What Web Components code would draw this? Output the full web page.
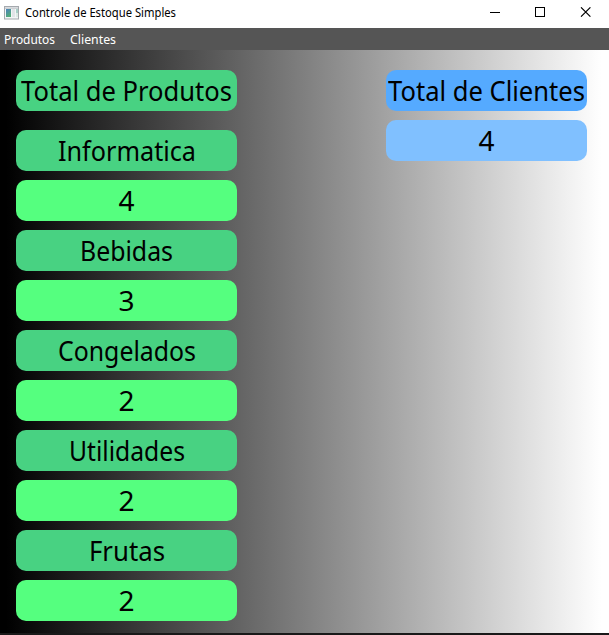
<!DOCTYPE html>
<html lang="pt-BR">
<head>
<meta charset="utf-8">
<title>Controle de Estoque Simples</title>
<style>
html,body{margin:0;height:100%;overflow:hidden}
body{font-family:"Noto Sans","Open Sans",sans-serif;color:#000}
</style>
</head>
<body>
<stock-window>
  <title-bar slot="title"><fit-text width="151">Controle de Estoque Simples</fit-text></title-bar>
  <menu-bar slot="menu"><fit-text width="51">Produtos</fit-text><fit-text width="46">Clientes</fit-text></menu-bar>
  <stat-column style="--w:221px">
    <stat-tile kind="product" class="lead"><fit-text width="211">Total de Produtos</fit-text></stat-tile>
    <stat-tile kind="product"><fit-text width="138">Informatica</fit-text></stat-tile>
    <stat-tile kind="product-value">4</stat-tile>
    <stat-tile kind="product"><fit-text width="93">Bebidas</fit-text></stat-tile>
    <stat-tile kind="product-value">3</stat-tile>
    <stat-tile kind="product"><fit-text width="138">Congelados</fit-text></stat-tile>
    <stat-tile kind="product-value">2</stat-tile>
    <stat-tile kind="product"><fit-text width="116">Utilidades</fit-text></stat-tile>
    <stat-tile kind="product-value">2</stat-tile>
    <stat-tile kind="product"><fit-text width="76">Frutas</fit-text></stat-tile>
    <stat-tile kind="product-value">2</stat-tile>
  </stat-column>
  <stat-column style="--w:201px">
    <stat-tile kind="client"><fit-text width="197">Total de Clientes</fit-text></stat-tile>
    <stat-tile kind="client-value">4</stat-tile>
  </stat-column>
</stock-window>
<script>
class Base extends HTMLElement{
  constructor(){super();this.attachShadow({mode:'open'}).innerHTML=this.constructor.html;}
}
customElements.define('stock-window',class extends Base{
  static html=`<style>
  :host{display:flex;flex-direction:column;width:609px;height:635px;box-sizing:border-box;background:#fff}
  main{flex:1;display:flex;justify-content:space-between;align-items:flex-start;padding:20px 22px 0 16px;background:linear-gradient(90deg,#000 6px,#fff 602px);border-bottom:2px solid #191919}
  </style><slot name="title"></slot><slot name="menu"></slot><main><slot></slot></main>`;
});
customElements.define('title-bar',class extends Base{
  static html=`<style>
  :host{display:flex;align-items:center;height:28px;flex:none;background:#fff;font-size:12px;box-sizing:border-box;padding:0 17px 3px 4px}
  .icon{margin-right:5px}.buttons{margin:0 0 1px auto;display:flex;gap:35px}
  svg{display:block}
  </style>
  <svg class="icon" width="16" height="14" viewBox="0 0 16 14">
    <defs><linearGradient id="g" x1="0" y1="0" x2=".5" y2="1"><stop stop-color="#4b80bd"/><stop offset="1" stop-color="#53ad78"/></linearGradient></defs>
    <rect width="15" height="13.5" fill="#a5a9ae"/><rect x="1" y="1" width="13" height="1" fill="#d9dcdf"/>
    <rect x="1" y="2.5" width="13" height="10" fill="#f3f5f6"/>
    <rect x="2" y="3" width="5" height="8" fill="url(#g)"/><rect x="8" y="3" width="3" height="8" fill="#e1e4e8"/><rect x="12" y="3" width="2" height="4" fill="#a9cfc7"/><rect x="12" y="7" width="2" height="4" fill="#dce9e4"/>
  </svg>
  <slot></slot>
  <div class="buttons">
    <svg width="10" height="10"><path d="M0 5.5H10" stroke="#000"/></svg>
    <svg width="10" height="10"><rect x=".5" y=".5" width="9" height="9" fill="none" stroke="#000"/></svg>
    <svg width="12" height="10"><path d="M1 .3L10.4 9.7M10.4 .3L1 9.7" stroke="#000" stroke-width="1.1"/></svg>
  </div>`;
});
customElements.define('menu-bar',class extends Base{
  static html=`<style>:host{display:flex;align-items:center;height:22px;flex:none;box-sizing:border-box;padding:1px 4px 0;gap:15px;background:#555;color:#fff;font-size:12px}</style><slot></slot>`;
});
customElements.define('stat-column',class extends Base{
  static html=`<style>:host{display:flex;flex-direction:column;gap:9px;width:var(--w)}::slotted(.lead){margin-bottom:10px}</style><slot></slot>`;
});
customElements.define('stat-tile',class extends Base{
  static html=`<style>
  :host{display:flex;align-items:center;justify-content:center;height:41px;border-radius:10px;font-size:28px;line-height:41px;white-space:nowrap}
  :host([kind=product]){background:#48d282}
  :host([kind=product-value]){background:#55ff7f}
  :host([kind=client]){background:#55aaff}
  :host([kind=client-value]){background:#80c0ff}
  </style><slot></slot>`;
});
/* Condenses or widens the label so that it takes the width given in pixels. */
customElements.define('fit-text',class extends Base{
  static html=`<style>:host{display:block;white-space:nowrap;flex:none}span{display:inline-block;transform-origin:0 50%}</style><span><slot></slot></span>`;
  connectedCallback(){
    const target=+this.getAttribute('width'),span=this.shadowRoot.querySelector('span');
    span.style.transform='scaleX('+target/span.getBoundingClientRect().width+')';
    this.style.width=target+'px';
  }
});
</script>
</body>
</html>
